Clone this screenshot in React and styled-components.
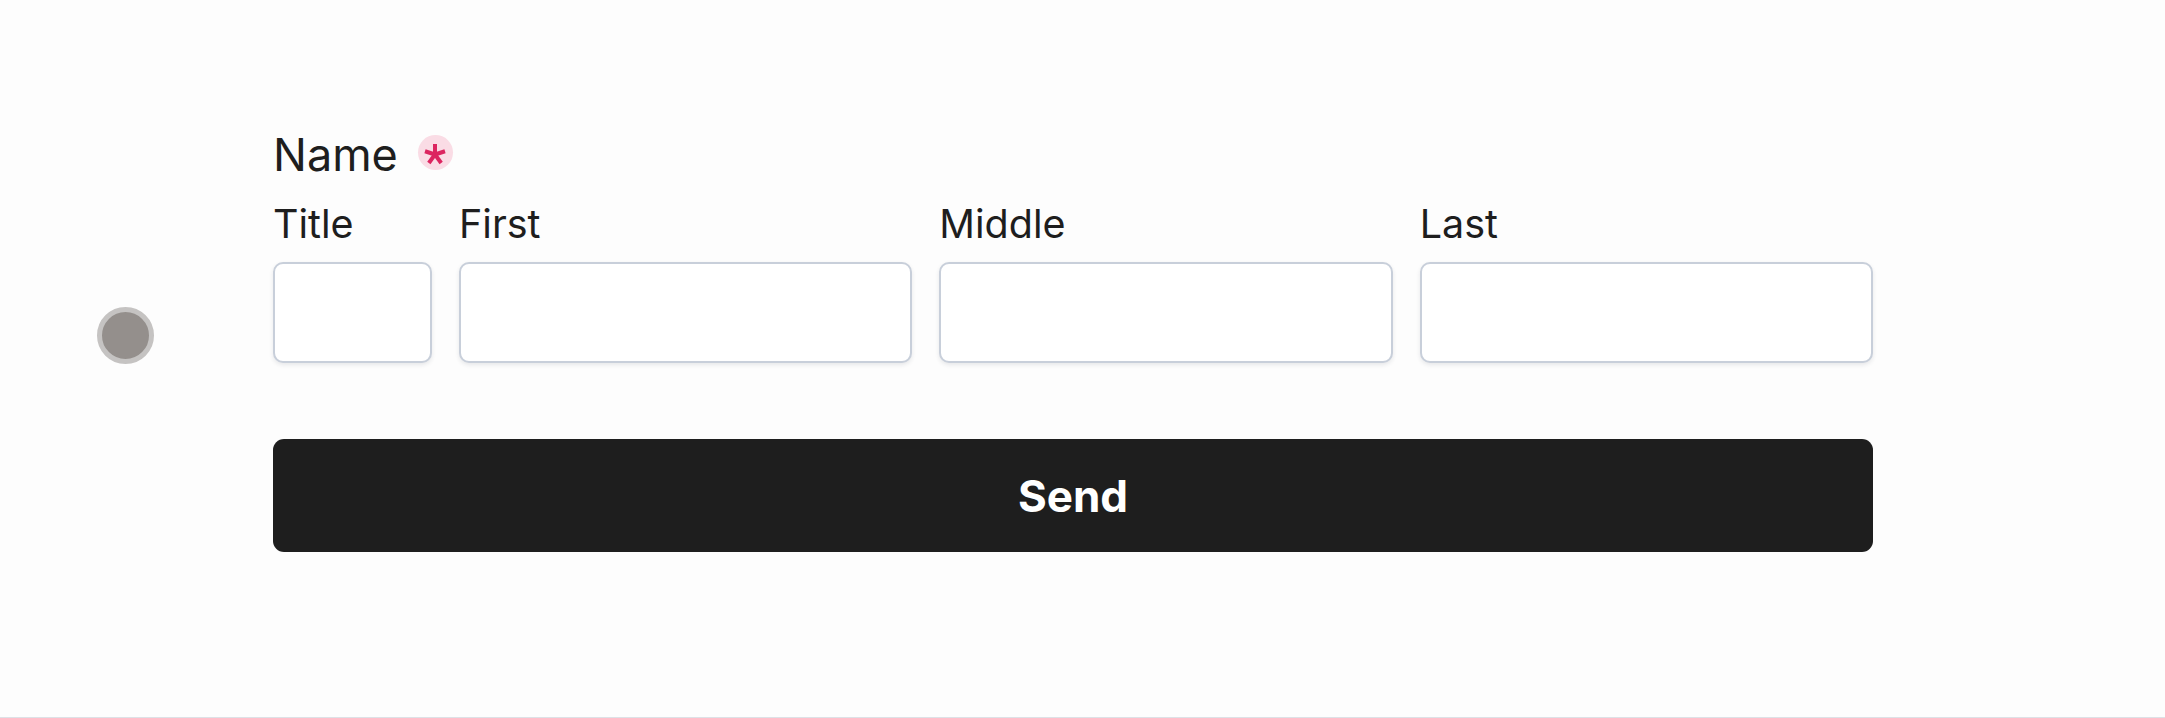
import React from 'react'
import styled, { createGlobalStyle } from 'styled-components'

const GlobalStyle = createGlobalStyle`
  body {
    margin: 0;
    background: #fdfdfd;
    font-family: Inter, "Noto Sans", sans-serif;
    color: #1e1e1e;
  }
`

const Page = styled.div`
  display: flex;
  height: 717px;
  border-bottom: 1px solid #dde1e6;
`

const Gutter = styled.div`
  width: 273px;
  flex-shrink: 0;
  box-sizing: border-box;
  padding: 307px 0 0 97px;
`

const Handle = styled.div`
  width: 57px;
  height: 57px;
  box-sizing: border-box;
  border-radius: 50%;
  background: #948f8c;
  border: 5px solid #c5c3c2;
`

const Form = styled.form`
  width: 1600px;
  padding-top: 128px;
`

const Legend = styled.div`
  display: flex;
  align-items: center;
  gap: 20px;
  font-size: 45px;
  line-height: 53px;
  font-weight: 400;
`

const Required = styled.span`
  display: flex;
  width: 35px;
  height: 35px;
  border-radius: 50%;
  background: #fadce5;
  margin-top: -4px;
`

const Fields = styled.div`
  display: grid;
  grid-template-columns: 159px repeat(3, 1fr);
  column-gap: 27px;
  margin-top: 19px;
`

const Field = styled.label`
  display: flex;
  flex-direction: column;
  gap: 14px;
`

const SubLabel = styled.span`
  font-size: 39.5px;
  line-height: 48px;
`

const Input = styled.input`
  height: 101px;
  box-sizing: border-box;
  width: 100%;
  background: #ffffff;
  border: 2px solid #c8cfda;
  border-radius: 10px;
  box-shadow: 0 2px 4px rgba(30, 40, 60, 0.1);
  font: inherit;
  outline: none;
`

const SendButton = styled.button`
  display: block;
  width: 100%;
  height: 113px;
  margin-top: 76px;
  border: none;
  border-radius: 11px;
  background: #1e1e1e;
  color: #ffffff;
  font-family: Inter, "Noto Sans", sans-serif;
  font-size: 44px;
  font-weight: 700;
  cursor: pointer;
`

const Asterisk = () => (
  <svg width="35" height="35" viewBox="0 0 35 35">
    <g stroke="#dc2560" strokeWidth="4" transform="translate(17 19.5)">
      {[-90, -18, 54, 126, 198].map((a) => (
        <line
          key={a}
          x1="0"
          y1="0"
          x2={(10.5 * Math.cos((a * Math.PI) / 180)).toFixed(2)}
          y2={(10.5 * Math.sin((a * Math.PI) / 180)).toFixed(2)}
        />
      ))}
    </g>
  </svg>
)

const fields = ['Title', 'First', 'Middle', 'Last']

const App = () => {
  return (
    <>
      <GlobalStyle />
      <Page>
        <Gutter>
          <Handle />
        </Gutter>
        <Form onSubmit={(e) => e.preventDefault()}>
          <Legend>
            Name
            <Required>
              <Asterisk />
            </Required>
          </Legend>
          <Fields>
            {fields.map((f) => (
              <Field key={f}>
                <SubLabel>{f}</SubLabel>
                <Input type="text" />
              </Field>
            ))}
          </Fields>
          <SendButton type="submit">Send</SendButton>
        </Form>
      </Page>
    </>
  )
}

export default App
